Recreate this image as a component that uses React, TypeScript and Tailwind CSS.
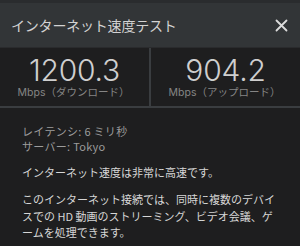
const jp = "font-['Noto_Sans_CJK_JP','Noto_Sans',sans-serif]";

const Stat = ({value, label}: {value: string; label: string}) => (
  <div className="flex-1 flex flex-col items-center justify-center pb-[2px]">
    <p className="font-['Inter',sans-serif] font-light text-[30px] leading-[32px] text-[#cfcfcf] tracking-[-0.2px]">
      {value}
    </p>
    <p className={`${jp} text-[10.5px] leading-[12px] text-[#858585] -ml-[2px]`}>
      <span className="font-['Inter',sans-serif]">Mbps</span>
      {label}
    </p>
  </div>
);

const App = () => {
  return (
    <div className={`w-[300px] h-[246px] bg-[#1e1e1f] overflow-hidden ${jp}`}>
      <div className="h-[3px] bg-[#2a2c2e]" />
      <div className="h-[45px] bg-[#323537] flex flex-row items-center justify-between pl-[11px] pr-[12px] border-b border-[#2a2b2d]">
        <h1 className="text-[14px] leading-[18px] text-[#d2d2d2] tracking-[-0.2px]">インターネット速度テスト</h1>
        <svg width="13" height="13" viewBox="0 0 13 13" className="mt-[1px]">
          <path d="M1.5 1.5 L11.5 11.5 M11.5 1.5 L1.5 11.5" stroke="#dcdcdc" strokeWidth="1.8" strokeLinecap="round" />
        </svg>
      </div>
      <div className="h-[60px] flex flex-row border-b-2 border-[#3a3d40]">
        <Stat value="1200.3" label="（ダウンロード）" />
        <div className="w-[2px] bg-[#3a3d40]" />
        <Stat value="904.2" label="（アップロード）" />
      </div>
      <div className="pl-[22px] pr-[18px] pt-[16px] text-[11px] leading-[15px]">
        <p className="text-[#9c9c9c] tracking-[0.3px]">レイテンシ: 6 ミリ秒</p>
        <p className="text-[#9c9c9c] tracking-[0.3px]">サーバー: Tokyo</p>
        <p className="text-[#d6d6d6] mt-[11px]">インターネット速度は非常に高速です。</p>
        <p className="text-[#d6d6d6] mt-[11px] leading-[16.5px]">
          このインターネット接続では、同時に複数のデバイスでの HD 動画のストリーミング、ビデオ会議、ゲームを処理できます。
        </p>
      </div>
    </div>
  );
};

export default App;
